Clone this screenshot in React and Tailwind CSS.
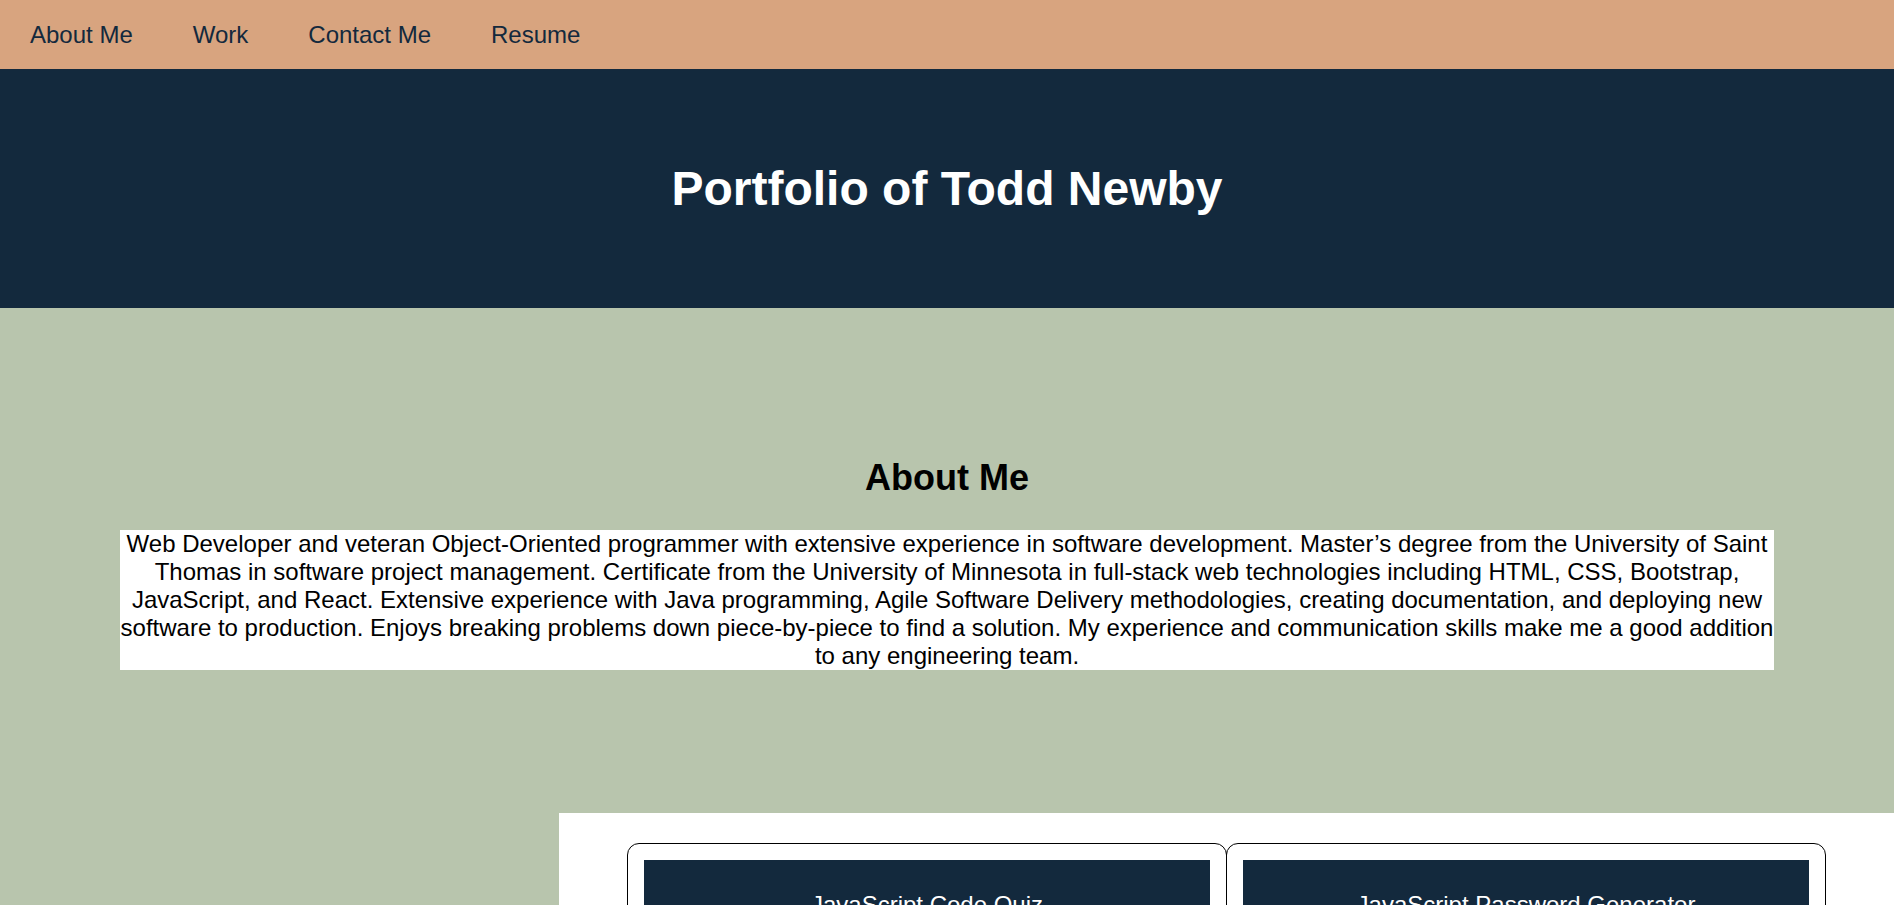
const navLinks = ["About Me", "Work", "Contact Me", "Resume"];

const projects = [
  { title: "JavaScript Code Quiz" },
  { title: "JavaScript Password Generator" },
];

function ProjectCard({ title }) {
  return (
    <div className="w-[600px] rounded-[12px] border border-black p-4 -ml-px first:ml-0">
      <div className="bg-[#13293D] h-[120px] pt-[31px] text-center text-[24px] text-white">
        {title}
      </div>
    </div>
  );
}

export default function App() {
  return (
    <div className="min-h-screen bg-[#B8C5AD] font-['Liberation_Sans',Arial,sans-serif] leading-[normal]">
      <nav className="flex h-[69px] items-center bg-[#D8A47F]">
        {navLinks.map((link) => (
          <a key={link} href="#" className="px-[30px] text-[24px] text-[#13293D]">
            {link}
          </a>
        ))}
      </nav>

      <header className="flex h-[239px] items-center justify-center bg-[#13293D]">
        <h1 className="text-[48px] font-bold text-white">Portfolio of Todd Newby</h1>
      </header>

      <section className="px-[120px] pt-[149px] pb-[143px] text-center">
        <h2 className="mb-[31px] text-[36px] font-bold text-black">About Me</h2>
        <p className="bg-white text-[24px] text-black">
          Web Developer and veteran Object-Oriented programmer with extensive experience in software development. Master’s degree from the University of Saint Thomas in software project management. Certificate from the University of Minnesota in full-stack web technologies including HTML, CSS, Bootstrap, JavaScript, and React. Extensive experience with Java programming, Agile Software Delivery methodologies, creating documentation, and deploying new software to production. Enjoys breaking problems down piece-by-piece to find a solution. My experience and communication skills make me a good addition to any engineering team.
        </p>
      </section>

      <section className="flex">
        <div className="w-[559px] shrink-0" />
        <div className="flex flex-1 justify-center bg-white pt-[30px] pb-[60px]">
          {projects.map((p) => (
            <ProjectCard key={p.title} title={p.title} />
          ))}
        </div>
      </section>
    </div>
  );
}
